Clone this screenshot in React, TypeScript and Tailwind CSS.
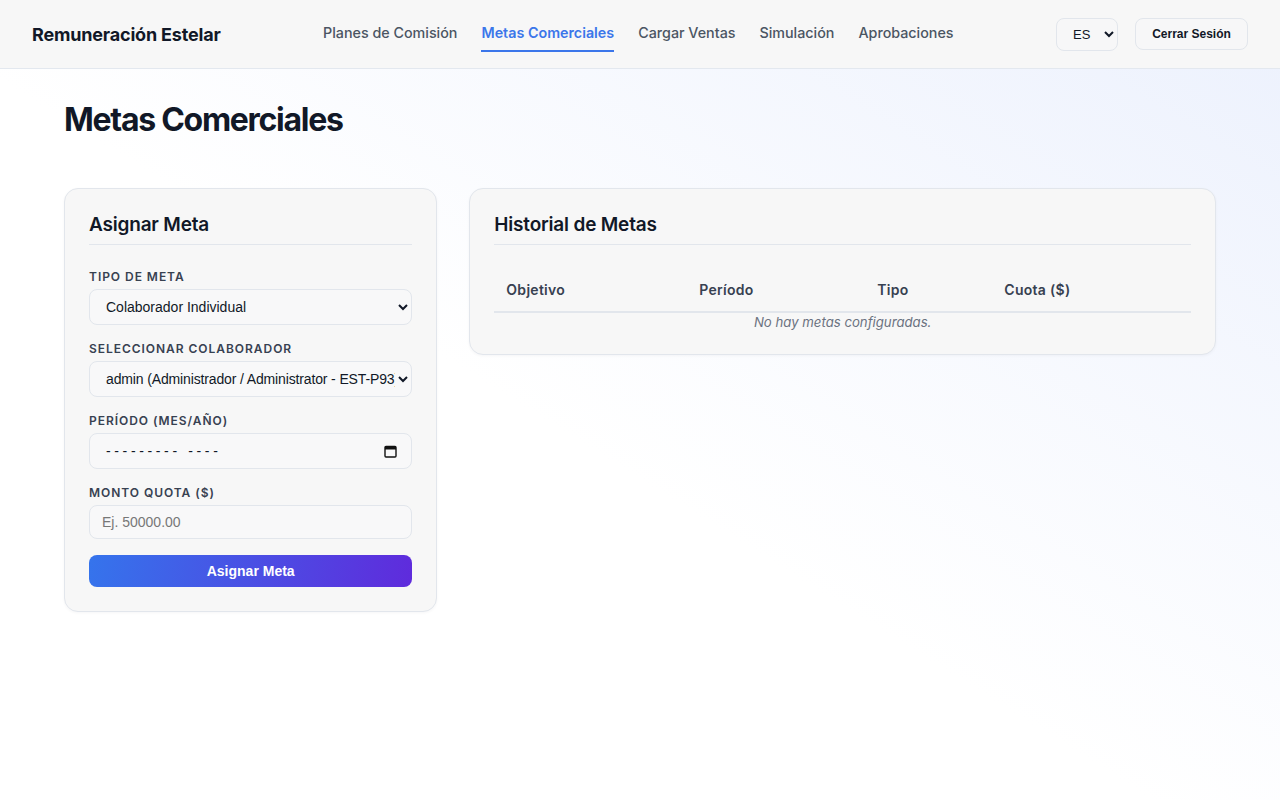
import React from "react";

const navItems = ["Planes de Comisión", "Metas Comerciales", "Cargar Ventas", "Simulación", "Aprobaciones"];
const columns = [
  { label: "Objetivo", w: "w-[193px]" },
  { label: "Período", w: "w-[178px]" },
  { label: "Tipo", w: "w-[127px]" },
  { label: "Cuota ($)", w: "" },
];

const labelCls = "block mb-1 text-[12px] leading-4 font-semibold uppercase tracking-[0.08em] text-[#374151]";
const boxCls =
  "w-full rounded-lg border border-[#e2e6ec] bg-[#f8f8f9] text-[14px] text-[#111827] font-['Liberation_Sans',Arial,sans-serif] outline-none";

const App: React.FC = () => {
  return (
    <div className="min-h-screen bg-[linear-gradient(to_bottom_left,#ecf1fd_0%,#ffffff_55%)] font-['Inter',sans-serif] text-[#111827]">
      <header className="h-[69px] flex items-center justify-between px-8 bg-[#f7f7f7] border-b border-[#e3e8ef]">
        <h1 className="text-[18px] font-bold tracking-[-0.01em] text-[#111827]">Remuneración Estelar</h1>

        <nav className="flex items-center gap-6">
          {navItems.map((item) => {
            const active = item === "Metas Comerciales";
            return (
              <a
                key={item}
                href="#"
                className={`pt-[6px] pb-[7px] text-[14.3px] leading-5 border-b-2 ${
                  active ? "text-[#3b76ea] border-[#3b76ea] font-semibold" : "text-[#4b5563] border-transparent font-medium"
                }`}
              >
                {item}
              </a>
            );
          })}
        </nav>

        <div className="flex items-center gap-[17px]">
          <select className="h-[33px] w-[62px] pl-3 rounded-lg border border-[#e2e6ec] bg-[#f7f7f8] text-[13px] text-[#111827] font-['Liberation_Sans',Arial,sans-serif]">
            <option>ES</option>
            <option>EN</option>
          </select>
          <button className="h-8 w-[113px] rounded-lg border border-[#e2e6ec] bg-[#f7f7f8] text-[12px] font-bold text-[#111827] font-['Liberation_Sans',Arial,sans-serif]">
            Cerrar Sesión
          </button>
        </div>
      </header>

      <main className="px-16 pt-[31px]">
        <h2 className="h-10 leading-10 text-[32px] font-bold tracking-[-0.04em] text-[#111827] mb-12">Metas Comerciales</h2>

        <div className="grid grid-cols-[1fr_2fr] gap-8 items-start">
          <section className="rounded-[14px] border border-[#e2e6ec] bg-[#f7f7f7] p-6 shadow-[0_1px_3px_rgba(15,23,42,0.04)]">
            <h3 className="text-[19px] leading-6 font-semibold tracking-[-0.01em] pb-[7px] border-b border-[#e2e6ec] mb-6">
              Asignar Meta
            </h3>

            <form className="flex flex-col gap-4" onSubmit={(e) => e.preventDefault()}>
              <div>
                <label className={labelCls}>Tipo de Meta</label>
                <select className={`${boxCls} h-9 pl-3`}>
                  <option>Colaborador Individual</option>
                  <option>Equipo</option>
                </select>
              </div>
              <div>
                <label className={labelCls}>Seleccionar Colaborador</label>
                <select className={`${boxCls} h-9 pl-3 tracking-[-0.01em]`}>
                  <option>admin (Administrador / Administrator - EST-P93)</option>
                </select>
              </div>
              <div>
                <label className={labelCls}>Período (Mes/Año)</label>
                <div className={`${boxCls} h-9 pl-4 pr-[14px] flex items-center justify-between`}>
                  <span className="tracking-[0.26em] text-[14px]">---------&nbsp;----</span>
                  <svg width="13" height="13" viewBox="0 0 13 13" aria-hidden="true">
                    <rect x="1" y="1.5" width="11" height="10.5" rx="1" fill="none" stroke="#111" strokeWidth="1.4" />
                    <rect x="1" y="1.5" width="11" height="3" fill="#111" />
                  </svg>
                </div>
              </div>
              <div>
                <label className={labelCls}>Monto Quota ($)</label>
                <input
                  type="number"
                  placeholder="Ej. 50000.00"
                  className={`${boxCls} h-[34px] pl-3 placeholder:text-[#777]`}
                />
              </div>
              <button
                type="submit"
                className="h-8 rounded-lg bg-[linear-gradient(100deg,#3574ec,#5f2bdc)] text-white text-[14px] font-bold font-['Liberation_Sans',Arial,sans-serif]"
              >
                Asignar Meta
              </button>
            </form>
          </section>

          <section className="rounded-[14px] border border-[#e2e6ec] bg-[#f7f7f7] p-6 shadow-[0_1px_3px_rgba(15,23,42,0.04)]">
            <h3 className="text-[19px] leading-6 font-semibold tracking-[-0.01em] pb-[7px] border-b border-[#e2e6ec] mb-6">
              Historial de Metas
            </h3>
            <table className="w-full border-collapse">
              <thead>
                <tr className="border-b-2 border-[#e2e6ec]">
                  {columns.map((c) => (
                    <th
                      key={c.label}
                      className={`${c.w} text-left px-3 py-[11px] text-[14px] leading-5 font-semibold tracking-[0.02em] text-[#374151]`}
                    >
                      {c.label}
                    </th>
                  ))}
                </tr>
              </thead>
              <tbody>
                <tr>
                  <td colSpan={4} className="text-center text-[13.2px] leading-4 pt-[1px] italic text-[#6b7280]">
                    No hay metas configuradas.
                  </td>
                </tr>
              </tbody>
            </table>
          </section>
        </div>
      </main>
    </div>
  );
};

export default App;
